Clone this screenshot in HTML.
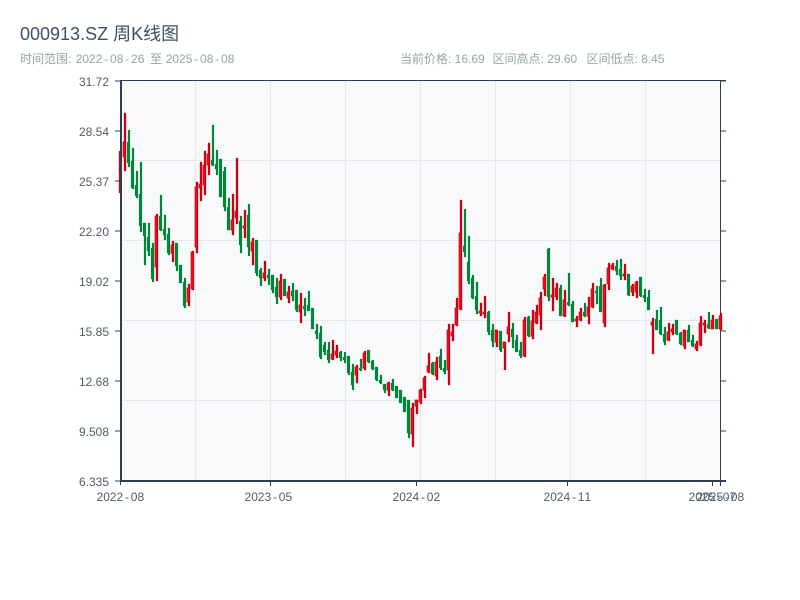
<!DOCTYPE html>
<html>
<head>
<meta charset="utf-8">
<title>000913.SZ 周K线图</title>
<style>
html,body{margin:0;padding:0;background:#fff;width:800px;height:600px;overflow:hidden}
svg{display:block}
text{font-family:"Liberation Sans","Noto Sans CJK SC",sans-serif}
.y{font-size:12px;fill:#4f5d6b;text-anchor:end}
.x{font-size:12px;fill:#4f5d6b}
.s{font-size:12px;fill:#95a5a6}
</style>
</head>
<body>
<svg width="800" height="600" viewBox="0 0 800 600" xmlns="http://www.w3.org/2000/svg">
<text x="20" y="40" font-size="18" fill="#3d5166">000913.SZ 周K线图</text>
<text class="s" x="20" y="63">时间范围:</text>
<text class="s" x="75.7 82.4 89 95.7 104.2 110 116.7 125.1 131 137.7" y="63">2022-08-26</text>
<text class="s" x="150" y="63">至</text>
<text class="s" x="165.7 172.4 179 185.7 194.2 200 206.7 215.1 221 227.7" y="63">2025-08-08</text>
<text class="s" x="400" y="63">当前价格: 16.69</text>
<text class="s" x="492.5" y="63">区间高点: 29.60</text>
<text class="s" x="586.5" y="63">区间低点: 8.45</text>

<rect x="120" y="81" width="600" height="400" fill="#f8f9fb"/>
<path d="M120 160.5H720M120 240.5H720M120 320.5H720M120 400.5H720M195.5 81V481M270.5 81V481M345.5 81V481M420.5 81V481M495.5 81V481M570.5 81V481M645.5 81V481" stroke="#e4e7eb" stroke-width="1" fill="none"/>

<path d="M720.5 81V481M720 81H726M720 131H726M720 181H726M720 231H726M720 281H726M720 331H726M720 381H726M720 431H726M720 481H726M120 80.5H726M712.5 481V486M720.5 481V486M270.5 481V486M416.5 481V486M567.5 481V486" stroke="#2c3e50" stroke-width="1" fill="none"/>

<!-- green candles -->
<path fill="#00873a" stroke="#00873a" stroke-width=".2" d="M128 130h2V167h-2zM127 142h2V163h-2zM132 148h2V189h-2zM131 161h2V188h-2zM136 171h2V198h-2zM135 185h2V196h-2zM140 162h2V232h-2zM139 194h2V226h-2zM144 223h2V265h-2zM143 223h2V236h-2zM148 223h2V256h-2zM147 237h2V251h-2zM152 243h2V282h-2zM151 248h2V279h-2zM160 195h2V231h-2zM159 216h2V230h-2zM164 215h2V240h-2zM163 229h2V235h-2zM168 228h2V255h-2zM167 234h2V253h-2zM176 243h2V271h-2zM175 243h2V266h-2zM180 265h2V283h-2zM179 265h2V283h-2zM184 278h2V308h-2zM183 282h2V306h-2zM212 125h2V166h-2zM211 160h2V165h-2zM216 150h2V175h-2zM215 164h2V169h-2zM220 159h2V197h-2zM219 159h2V197h-2zM224 167h2V211h-2zM223 171h2V207h-2zM228 198h2V230h-2zM227 207h2V230h-2zM240 216h2V253h-2zM239 221h2V245h-2zM248 204h2V256h-2zM247 215h2V247h-2zM256 240h2V276h-2zM255 240h2V273h-2zM260 268h2V286h-2zM259 270h2V278h-2zM268 269h2V285h-2zM267 275h2V278h-2zM272 275h2V293h-2zM271 275h2V290h-2zM276 278h2V304h-2zM275 287h2V297h-2zM284 279h2V296h-2zM283 279h2V296h-2zM292 283h2V301h-2zM291 291h2V296h-2zM296 290h2V312h-2zM295 290h2V310h-2zM304 298h2V316h-2zM303 306h2V309h-2zM308 291h2V311h-2zM307 305h2V311h-2zM312 308h2V329h-2zM311 308h2V329h-2zM316 324h2V339h-2zM315 331h2V334h-2zM320 326h2V359h-2zM319 333h2V357h-2zM324 342h2V355h-2zM323 345h2V352h-2zM328 342h2V363h-2zM327 350h2V360h-2zM340 351h2V361h-2zM339 352h2V358h-2zM344 352h2V363h-2zM343 357h2V360h-2zM348 356h2V375h-2zM347 356h2V373h-2zM352 364h2V390h-2zM351 372h2V385h-2zM360 359h2V371h-2zM359 368h2V370h-2zM368 350h2V363h-2zM367 350h2V362h-2zM372 360h2V370h-2zM371 361h2V369h-2zM376 367h2V381h-2zM375 367h2V380h-2zM380 375h2V384h-2zM379 380h2V383h-2zM384 384h2V393h-2zM383 384h2V390h-2zM392 379h2V391h-2zM391 383h2V390h-2zM396 386h2V398h-2zM395 386h2V398h-2zM400 390h2V403h-2zM399 390h2V403h-2zM404 397h2V412h-2zM403 397h2V412h-2zM408 400h2V438h-2zM407 400h2V433h-2zM432 362h2V375h-2zM431 363h2V374h-2zM440 349h2V370h-2zM439 356h2V368h-2zM444 360h2V374h-2zM443 368h2V372h-2zM464 209h2V257h-2zM463 246h2V252h-2zM468 236h2V284h-2zM467 262h2V281h-2zM472 275h2V299h-2zM471 278h2V298h-2zM476 282h2V314h-2zM475 296h2V310h-2zM488 311h2V335h-2zM487 312h2V332h-2zM492 324h2V347h-2zM491 330h2V341h-2zM500 331h2V352h-2zM499 331h2V350h-2zM512 323h2V348h-2zM511 329h2V337h-2zM516 335h2V352h-2zM515 340h2V352h-2zM520 342h2V358h-2zM519 350h2V356h-2zM528 316h2V337h-2zM527 317h2V336h-2zM548 248h2V301h-2zM547 249h2V297h-2zM560 285h2V316h-2zM559 288h2V316h-2zM568 273h2V306h-2zM567 302h2V305h-2zM572 301h2V322h-2zM571 304h2V322h-2zM584 303h2V317h-2zM583 312h2V316h-2zM596 286h2V304h-2zM595 291h2V293h-2zM600 278h2V312h-2zM599 286h2V312h-2zM616 260h2V275h-2zM615 266h2V271h-2zM620 259h2V280h-2zM619 269h2V276h-2zM628 274h2V296h-2zM627 274h2V295h-2zM640 277h2V297h-2zM639 277h2V296h-2zM644 289h2V302h-2zM643 295h2V298h-2zM648 290h2V310h-2zM647 297h2V310h-2zM656 310h2V330h-2zM655 319h2V330h-2zM660 307h2V335h-2zM659 320h2V334h-2zM664 327h2V345h-2zM663 334h2V342h-2zM676 320h2V335h-2zM675 320h2V334h-2zM680 332h2V345h-2zM679 333h2V344h-2zM688 325h2V342h-2zM687 330h2V342h-2zM692 335h2V347h-2zM691 340h2V346h-2zM708 312h2V329h-2zM707 324h2V328h-2zM716 319h2V329h-2zM715 319h2V329h-2z"/>

<!-- red wicks -->
<path fill="#cc000f" stroke="#cc000f" stroke-width=".3" d="M119 151h2V193h-2zM124 113h2V171h-2zM156 214h2V281h-2zM172 241h2V262h-2zM188 284h2V306h-2zM192 251h2V290h-2zM196 182h2V253h-2zM200 162h2V201h-2zM204 151h2V195h-2zM208 143h2V175h-2zM232 194h2V235h-2zM236 158h2V224h-2zM244 210h2V238h-2zM252 238h2V265h-2zM264 261h2V281h-2zM280 274h2V300h-2zM288 286h2V303h-2zM300 293h2V323h-2zM332 340h2V360h-2zM336 345h2V358h-2zM356 365h2V383h-2zM364 351h2V370h-2zM388 382h2V396h-2zM412 403h2V447h-2zM416 400h2V414h-2zM420 389h2V404h-2zM424 376h2V398h-2zM428 353h2V373h-2zM436 357h2V380h-2zM448 324h2V385h-2zM452 324h2V341h-2zM456 298h2V326h-2zM460 200h2V310h-2zM480 303h2V316h-2zM484 296h2V318h-2zM496 330h2V347h-2zM504 342h2V370h-2zM508 312h2V342h-2zM524 317h2V357h-2zM532 310h2V339h-2zM536 305h2V324h-2zM540 292h2V330h-2zM544 274h2V296h-2zM552 278h2V311h-2zM556 283h2V300h-2zM564 290h2V317h-2zM576 316h2V327h-2zM580 308h2V321h-2zM588 297h2V324h-2zM592 283h2V308h-2zM604 284h2V327h-2zM608 263h2V290h-2zM612 263h2V270h-2zM624 264h2V280h-2zM632 284h2V296h-2zM636 281h2V298h-2zM652 318h2V354h-2zM668 323h2V341h-2zM672 324h2V335h-2zM684 330h2V349h-2zM696 341h2V351h-2zM700 316h2V346h-2zM704 320h2V333h-2zM712 315h2V329h-2zM720 313h2V330h-2z"/>

<!-- red bodies -->
<path fill="#f4141f" stroke="#cc000f" stroke-width=".7" d="M123 142h2V157h-2zM155 216h2V267h-2zM171 245h2V253h-2zM187 288h2V302h-2zM191 252h2V289h-2zM195 187h2V247h-2zM199 184h2V188h-2zM203 165h2V185h-2zM207 154h2V165h-2zM231 220h2V230h-2zM235 211h2V218h-2zM243 226h2V228h-2zM251 242h2V251h-2zM263 273h2V278h-2zM279 281h2V297h-2zM287 292h2V298h-2zM299 305h2V312h-2zM331 354h2V359h-2zM335 351h2V355h-2zM355 367h2V375h-2zM363 353h2V368h-2zM387 383h2V390h-2zM411 408h2V434h-2zM415 400h2V406h-2zM419 390h2V402h-2zM423 378h2V390h-2zM427 366h2V372h-2zM435 362h2V376h-2zM447 330h2V370h-2zM451 332h2V336h-2zM455 308h2V325h-2zM459 233h2V309h-2zM479 311h2V313h-2zM483 312h2V314h-2zM495 330h2V342h-2zM503 342h2V348h-2zM507 327h2V334h-2zM523 320h2V356h-2zM531 321h2V336h-2zM535 312h2V323h-2zM539 298h2V315h-2zM543 277h2V289h-2zM551 295h2V297h-2zM555 288h2V297h-2zM563 300h2V316h-2zM575 319h2V321h-2zM579 312h2V320h-2zM587 307h2V316h-2zM591 289h2V307h-2zM603 285h2V323h-2zM607 268h2V284h-2zM611 265h2V269h-2zM623 274h2V276h-2zM631 286h2V292h-2zM635 282h2V292h-2zM651 322h2V325h-2zM667 332h2V340h-2zM671 329h2V332h-2zM683 330h2V346h-2zM695 344h2V349h-2zM699 323h2V345h-2zM703 323h2V325h-2zM711 320h2V329h-2zM719 316h2V329h-2z"/>

<!-- left + bottom axis -->
<path d="M121 80V482M120 481H726" stroke="#2c3e50" stroke-width="2" fill="none"/>
<path d="M115 81H120M115 131H120M115 181H120M115 231H120M115 281H120M115 331H120M115 381H120M115 431H120M115 481H120M120.5 481V485" stroke="#2c3e50" stroke-width="1" fill="none"/>

<text class="y" x="109" y="86">31.72</text>
<text class="y" x="109" y="136">28.54</text>
<text class="y" x="109" y="186">25.37</text>
<text class="y" x="109" y="236">22.20</text>
<text class="y" x="109" y="286">19.02</text>
<text class="y" x="109" y="336">15.85</text>
<text class="y" x="109" y="386">12.68</text>
<text class="y" x="109" y="436">9.508</text>
<text class="y" x="109" y="486">6.335</text>

<text class="x" x="96.5 103.2 109.8 116.5 125 130.8 137.5" y="501">2022-08</text>
<text class="x" x="244.5 251.2 257.8 264.5 273 278.8 285.5" y="501">2023-05</text>
<text class="x" x="392.5 399.2 405.8 412.5 421 426.8 433.5" y="501">2024-02</text>
<text class="x" x="543.5 550.2 556.8 563.5 572 577.8 584.5" y="501">2024-11</text>
<text class="x" x="688.5 695.2 701.8 708.5 717 722.8 729.5" y="501">2025-07</text>
<text class="x" x="696.5 703.2 709.8 716.5 725 730.8 737.5" y="501">2025-08</text>
</svg>
</body>
</html>
